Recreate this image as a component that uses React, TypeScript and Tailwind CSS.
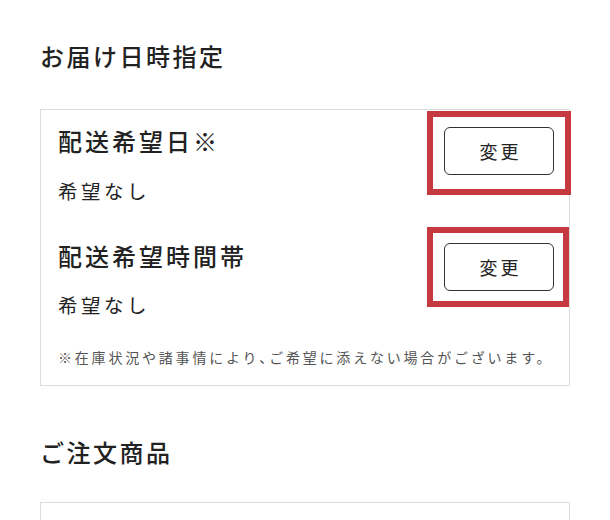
import React from "react";

const font = { fontFamily: '"Noto Sans CJK JP", "Noto Sans", sans-serif' };

function ChangeButton() {
  return (
    <button className="w-[110px] h-[48px] rounded-[6px] border border-[#333] bg-white text-[18px] leading-none tracking-[3px] text-[#222] flex items-center justify-center pl-[3px]">
      変更
    </button>
  );
}

export default function App() {
  return (
    <div className="bg-white w-[610px] h-[520px] overflow-hidden px-[40px]" style={font}>
      <h2 className="pt-[40px] text-[24px] leading-[32px] font-medium tracking-[2.5px] text-[#222]">
        お届け日時指定
      </h2>
      <div className="relative mt-[37px] border border-[#dcdcdc] pl-[17px] pr-[15px] pt-[17px] pb-[18px]">
        <div className="flex items-start justify-between">
          <div className="-mt-[2px]">
            <h3 className="text-[24px] leading-[32px] font-medium tracking-[3px] text-[#222]">配送希望日※</h3>
            <p className="mt-[20px] text-[19.5px] leading-[28px] tracking-[3.5px] text-[#222]">希望なし</p>
          </div>
          <ChangeButton />
        </div>
        <div className="mt-[38px] flex items-start justify-between">
          <div className="-mt-[3px]">
            <h3 className="text-[24px] leading-[32px] font-medium tracking-[3px] text-[#222]">配送希望時間帯</h3>
            <p className="mt-[19px] text-[19.5px] leading-[28px] tracking-[3.5px] text-[#222]">希望なし</p>
          </div>
          <ChangeButton />
        </div>
        <p className="mt-[28px] text-[14px] leading-[20px] tracking-[2.8px] text-[#555] whitespace-nowrap">
          ※在庫状況や諸事情により<span className="[font-feature-settings:'palt']">、</span>ご希望に添えない場合がございます。
        </p>
        <div className="absolute left-[386px] top-[1px] w-[144px] h-[84px] border-[6px] border-[#c53a41]" />
        <div className="absolute left-[386px] top-[117px] w-[142px] h-[80px] border-[6px] border-[#c53a41]" />
      </div>
      <h2 className="mt-[50px] text-[24px] leading-[32px] font-medium tracking-[2.5px] text-[#222]">ご注文商品</h2>
      <div className="mt-[34px] h-[100px] border border-[#dcdcdc]" />
    </div>
  );
}
